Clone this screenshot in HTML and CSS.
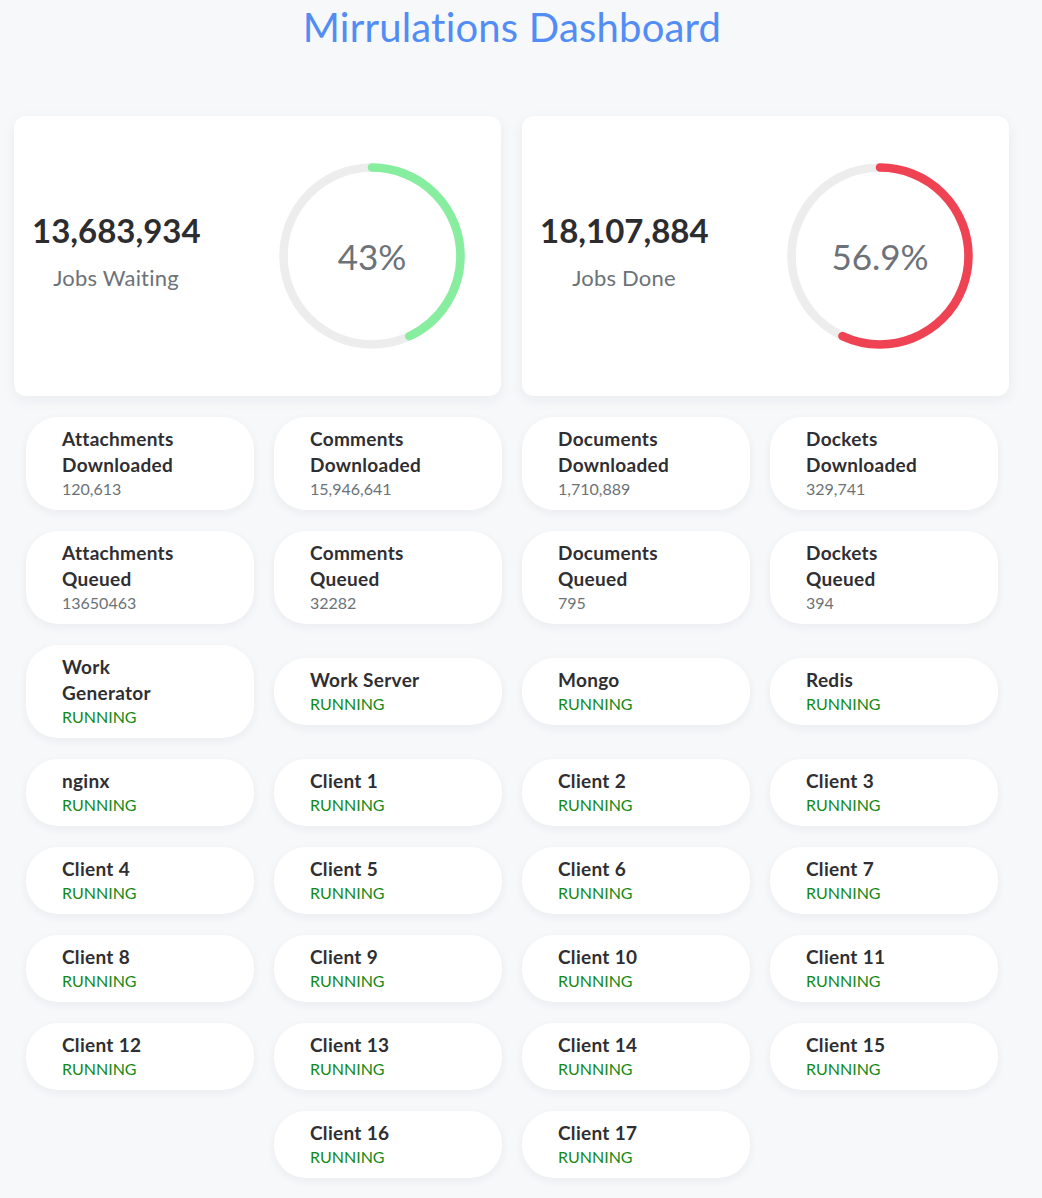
FILE: index.html
```html
<!DOCTYPE html>
<html lang="en">
<head>
<meta charset="utf-8">
<title>Mirrulations Dashboard</title>
<link rel="stylesheet" href="styles.css">
</head>
<body>
<div class="page">
  <h1 class="title">Mirrulations Dashboard</h1>

  <section class="summary">
    <div class="big-card">
      <div class="totals">
        <div class="total-num">13,683,934</div>
        <div class="total-label">Jobs Waiting</div>
      </div>
      <div class="ring">
        <svg width="186" height="186" viewBox="0 0 186 186">
          <circle class="ring-track" cx="93" cy="93" r="88.5"></circle>
          <circle class="ring-bar ring-green" cx="93" cy="93" r="88.5" stroke-dasharray="239.1 600" transform="rotate(-90 93 93)"></circle>
        </svg>
        <span class="ring-text">43%</span>
      </div>
    </div>
    <div class="big-card">
      <div class="totals">
        <div class="total-num">18,107,884</div>
        <div class="total-label">Jobs Done</div>
      </div>
      <div class="ring">
        <svg width="186" height="186" viewBox="0 0 186 186">
          <circle class="ring-track" cx="93" cy="93" r="88.5"></circle>
          <circle class="ring-bar ring-red" cx="93" cy="93" r="88.5" stroke-dasharray="316.4 600" transform="rotate(-90 93 93)"></circle>
        </svg>
        <span class="ring-text">56.9%</span>
      </div>
    </div>
  </section>

  <section class="tiles">
    <div class="tile"><div class="tile-name">Attachments Downloaded</div><div class="tile-val">120,613</div></div>
    <div class="tile"><div class="tile-name">Comments Downloaded</div><div class="tile-val">15,946,641</div></div>
    <div class="tile"><div class="tile-name">Documents Downloaded</div><div class="tile-val">1,710,889</div></div>
    <div class="tile"><div class="tile-name">Dockets Downloaded</div><div class="tile-val">329,741</div></div>

    <div class="tile"><div class="tile-name">Attachments Queued</div><div class="tile-val">13650463</div></div>
    <div class="tile"><div class="tile-name">Comments Queued</div><div class="tile-val">32282</div></div>
    <div class="tile"><div class="tile-name">Documents Queued</div><div class="tile-val">795</div></div>
    <div class="tile"><div class="tile-name">Dockets Queued</div><div class="tile-val">394</div></div>

    <div class="tile"><div class="tile-name">Work Generator</div><div class="tile-status">RUNNING</div></div>
    <div class="tile"><div class="tile-name">Work Server</div><div class="tile-status">RUNNING</div></div>
    <div class="tile"><div class="tile-name">Mongo</div><div class="tile-status">RUNNING</div></div>
    <div class="tile"><div class="tile-name">Redis</div><div class="tile-status">RUNNING</div></div>

    <div class="tile"><div class="tile-name">nginx</div><div class="tile-status">RUNNING</div></div>
    <div class="tile"><div class="tile-name">Client 1</div><div class="tile-status">RUNNING</div></div>
    <div class="tile"><div class="tile-name">Client 2</div><div class="tile-status">RUNNING</div></div>
    <div class="tile"><div class="tile-name">Client 3</div><div class="tile-status">RUNNING</div></div>

    <div class="tile"><div class="tile-name">Client 4</div><div class="tile-status">RUNNING</div></div>
    <div class="tile"><div class="tile-name">Client 5</div><div class="tile-status">RUNNING</div></div>
    <div class="tile"><div class="tile-name">Client 6</div><div class="tile-status">RUNNING</div></div>
    <div class="tile"><div class="tile-name">Client 7</div><div class="tile-status">RUNNING</div></div>

    <div class="tile"><div class="tile-name">Client 8</div><div class="tile-status">RUNNING</div></div>
    <div class="tile"><div class="tile-name">Client 9</div><div class="tile-status">RUNNING</div></div>
    <div class="tile"><div class="tile-name">Client 10</div><div class="tile-status">RUNNING</div></div>
    <div class="tile"><div class="tile-name">Client 11</div><div class="tile-status">RUNNING</div></div>

    <div class="tile"><div class="tile-name">Client 12</div><div class="tile-status">RUNNING</div></div>
    <div class="tile"><div class="tile-name">Client 13</div><div class="tile-status">RUNNING</div></div>
    <div class="tile"><div class="tile-name">Client 14</div><div class="tile-status">RUNNING</div></div>
    <div class="tile"><div class="tile-name">Client 15</div><div class="tile-status">RUNNING</div></div>

    <div class="tile"><div class="tile-name">Client 16</div><div class="tile-status">RUNNING</div></div>
    <div class="tile"><div class="tile-name">Client 17</div><div class="tile-status">RUNNING</div></div>
  </section>
</div>
</body>
</html>
```

FILE: styles.css
```css
* { box-sizing: border-box; }

html, body {
  margin: 0;
  background: #f7f8fa;
}

body {
  font-family: Lato, "Open Sans", "Liberation Sans", sans-serif;
  color: #2f2f33;
}

.page {
  width: 1024px;
}

.title {
  margin: 0;
  padding-top: 4px;
  font-size: 40px;
  line-height: 46px;
  font-weight: 400;
  letter-spacing: 0.2px;
  color: #528cf5;
  text-align: center;
}

.summary {
  display: grid;
  grid-template-columns: 487px 487px;
  column-gap: 21px;
  margin: 66px 15px 0 14px;
}

.big-card {
  height: 280px;
  background: #fff;
  border-radius: 12px;
  box-shadow: 0 4px 14px rgba(20, 30, 50, 0.06);
  display: flex;
  align-items: center;
  padding: 0 36px 0 18px;
}

.totals {
  width: 168px;
  text-align: center;
  margin-top: -10px;
}

.total-num {
  font-size: 33px;
  font-weight: 700;
  line-height: 36px;
  color: #2d2d30;
  white-space: nowrap;
}

.total-label {
  margin-top: 17px;
  font-size: 22px;
  line-height: 26px;
  letter-spacing: 0.2px;
  color: #6c7278;
}

.ring {
  margin-left: auto;
  width: 186px;
  height: 186px;
  position: relative;
  display: flex;
  align-items: center;
  justify-content: center;
}

.ring svg {
  position: absolute;
  left: 0;
  top: 0;
}

.ring-track {
  fill: none;
  stroke: #ededed;
  stroke-width: 8.5;
}

.ring-bar {
  fill: none;
  stroke-width: 8.5;
  stroke-linecap: round;
}

.ring-green { stroke: #86ee9e; }
.ring-red { stroke: #ef4354; }

.ring-text {
  position: relative;
  font-size: 35px;
  font-weight: 400;
  color: #6c7278;
}

.tiles {
  display: flex;
  flex-wrap: wrap;
  justify-content: center;
  align-items: center;
  padding: 10px 16px 0;
}

.tile {
  width: 228px;
  margin: 10.5px 10px;
  padding: 9px 12px 10px 36px;
  background: #fff;
  border-radius: 32px;
  box-shadow: 0 3px 10px rgba(20, 30, 50, 0.06);
}

.tile-name {
  max-width: 128px;
  font-size: 19px;
  font-weight: 700;
  line-height: 26px;
  letter-spacing: 0.3px;
  color: #2f2f33;
}

.tile-val {
  font-size: 16px;
  line-height: 22px;
  color: #6c7278;
}

.tile-status {
  font-size: 16px;
  line-height: 22px;
  color: #128a18;
}
```
